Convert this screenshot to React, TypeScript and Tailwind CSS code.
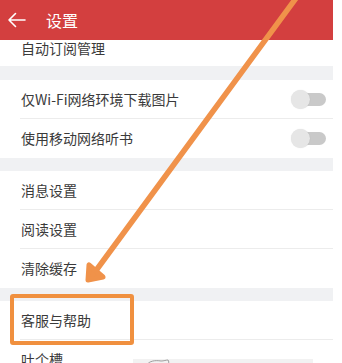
import React from 'react';

const Toggle = () => (
  <div className="relative w-[35px] h-[19px] flex items-center">
    <div className="absolute right-0 w-[28px] h-[13px] rounded-full bg-[#c9c9c9]" />
    <div className="absolute left-0 w-[19px] h-[19px] rounded-full bg-[#e6e6e6] shadow-[0_0_1px_rgba(0,0,0,0.15)]" />
  </div>
);

const Row = ({ label, divider = true, right }: { label: string; divider?: boolean; right?: React.ReactNode }) => (
  <div className="h-[39px] pl-[20px] bg-white">
    <div className={`h-full flex items-center justify-between pl-px pr-[7px] ${divider ? 'border-b border-[#ececec]' : ''}`}>
      <span className="text-[14px] text-[#3a3a3a]">{label}</span>
      {right}
    </div>
  </div>
);

const Gap = () => <div className="h-[13px] bg-[#f0f1f3]" />;

export default function App() {
  return (
    <div
      className="relative w-[342px] h-[363px] overflow-hidden bg-white"
      style={{ fontFamily: '"Noto Sans CJK SC", "Noto Sans", sans-serif' }}
    >
      <div className="w-[333px]">
        {/* header */}
        <div className="h-[40px] bg-[#d33f3f] flex items-center text-white">
          <svg width="20" height="16" viewBox="0 0 20 16" className="ml-[7px]" fill="none" stroke="white" strokeWidth="1.6" strokeLinecap="round" strokeLinejoin="round">
            <path d="M18 8H2M8.5 1.5 2 8l6.5 6.5" />
          </svg>
          <span className="ml-[19px] text-[16px]">设置</span>
        </div>

        <div className="h-[26px] pl-[21px] bg-white overflow-hidden">
          <span className="block text-[14px] leading-[16px] text-[#3a3a3a]">自动订阅管理</span>
        </div>
        <div className="h-[14px] bg-[#f0f1f3]" />

        <Row label="仅Wi-Fi网络环境下载图片" right={<Toggle />} />
        <Row label="使用移动网络听书" divider={false} right={<Toggle />} />
        <Gap />
        <Row label="消息设置" />
        <Row label="阅读设置" />
        <Row label="清除缓存" divider={false} />
        <Gap />
        <Row label="客服与帮助" />
        <Row label="吐个槽" />
      </div>

      {/* bottom popup peeking */}
      <div className="absolute left-[133px] top-[359px] w-[180px] h-[10px] bg-[#f2f2f2]">
        <svg width="40" height="6" viewBox="0 0 40 6" className="absolute left-[12px] top-0" fill="none" stroke="#888" strokeWidth="0.8">
          <path d="M2 6C4 2 10 1 16 2c3 0 5-1 7-1M23 1c1 1 1 3 0 5" />
        </svg>
      </div>

      {/* orange highlight box */}
      <div className="absolute left-[10px] top-[294px] w-[124px] h-[51px] border-[4px] border-[#f0903f] rounded-[3px]" />

      {/* orange arrow */}
      <svg className="absolute left-0 top-0" width="342" height="363" viewBox="0 0 342 363" fill="none">
        <path d="M302 -10L92 276" stroke="#f0924a" strokeWidth="5.5" strokeLinecap="round" />
        <path d="M89 265L88 280L103 277Z" fill="#f0924a" stroke="#f0924a" strokeWidth="5" strokeLinecap="round" strokeLinejoin="round" />
      </svg>
    </div>
  );
}
